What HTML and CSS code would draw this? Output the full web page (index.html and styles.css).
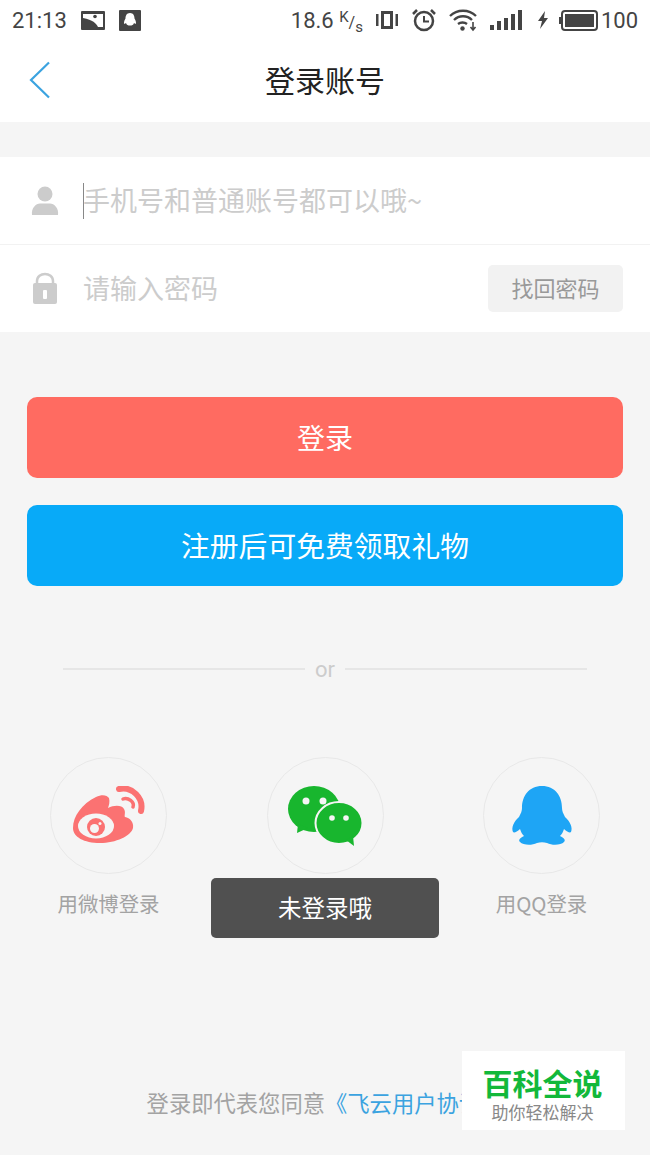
FILE: index.html
```html
<!DOCTYPE html>
<html>
<head>
  <meta charset="utf-8">
  <title>登录账号</title>
  <link rel="stylesheet" href="styles.css">
</head>
<body>

  <div class="status-bar">
    <span class="time">21:13</span>
    <svg width="24" height="19" viewBox="0 0 24 19"><rect width="24" height="19" rx="1" fill="#444"/><path d="M2 3 H22 V16 H17 C15 12 12 9 2 7 Z" fill="#fff"/><circle cx="14" cy="5.500" r="1.800" fill="#444"/></svg>
    <svg class="qq-note" width="22" height="21" viewBox="0 0 22 21"><rect width="22" height="21" rx="1" fill="#444"/><path d="M11 3 C7.500 3 6.500 6 6.500 8.500 C5 11 4.500 13.500 5.500 14 L7 13 C7.500 15 9 15.500 11 15.500 C13 15.500 14.500 15 15 13 L16.500 14 C17.500 13.500 17 11 15.500 8.500 C15.500 6 14.500 3 11 3 Z" fill="#fff"/></svg>
    <span class="speed">18.6 <span class="speed-unit"><sup>K</sup>/<sub>s</sub></span></span>
    <svg width="24" height="20" viewBox="0 0 24 20"><path d="M6 1 H18 V19 H6 Z M9 4 V16 H15 V4 Z" fill="#444" fill-rule="evenodd"/><rect x="1" y="4" width="2.500" height="12" fill="#444"/><rect x="20.500" y="4" width="2.500" height="12" fill="#444"/></svg>
    <svg width="26" height="24" viewBox="0 0 26 24"><circle cx="13" cy="13" r="9" fill="none" stroke="#444" stroke-width="2.500"/><path d="M13 8 V13.500 H18" fill="none" stroke="#444" stroke-width="2"/><path d="M2 6 L6 2 M24 6 L20 2" stroke="#444" stroke-width="2.500"/></svg>
    <svg width="28" height="24" viewBox="0 0 28 24"><path d="M1 8 C8 1 20 1 27 8 M5 12 C10 7 18 7 23 12 M9 16 C11.500 14 15.500 14 18 16" fill="none" stroke="#444" stroke-width="2.300"/><circle cx="13.500" cy="20.500" r="2.200" fill="#444"/><path d="M24 14 V21 M21.500 19 L24 22 L26.500 19" fill="none" stroke="#444" stroke-width="1.600"/></svg>
    <svg class="signal" width="33" height="20" viewBox="0 0 33 20"><rect x="0" y="15" width="4" height="5" fill="#444"/><rect x="7" y="11" width="4" height="9" fill="#444"/><rect x="14" y="8" width="4" height="12" fill="#444"/><rect x="21" y="4" width="4" height="16" fill="#444"/><rect x="28" y="0" width="4" height="20" fill="#444"/></svg>
    <svg class="bolt" width="12" height="18" viewBox="0 0 12 18"><path d="M8 0 L1 10 H5 L3 18 L11 7 H7 Z" fill="#444"/></svg>
    <svg class="batt" width="39" height="21" viewBox="0 0 39 21"><rect x="3" y="1" width="35" height="19" rx="3" fill="none" stroke="#444" stroke-width="2"/><rect x="6" y="4" width="29" height="13" fill="#444"/><rect x="0" y="7" width="2" height="7" fill="#444"/></svg>
    <span class="battery">100</span>
  </div>

  <div class="nav">
    <svg class="back" width="22" height="38" viewBox="0 0 22 38"><path d="M20 1.500 L2 19 L20 36.500" fill="none" stroke="#3ba3e0" stroke-width="2.200"/></svg>
    <div class="nav-title">登录账号</div>
  </div>

  <div class="form">
    <div class="row row-user">
      <svg class="row-icon" width="28" height="30" viewBox="0 0 28 30"><circle cx="14" cy="8" r="7.500" fill="#ccc"/><path d="M1 29 C0 22 5 17.500 9 17.500 H19 C23 17.500 28 22 27 29 Z" fill="#ccc"/></svg>
      <span class="caret"></span>
      <span class="placeholder first">手机号和普通账号都可以哦~</span>
    </div>
    <div class="row">
      <svg class="row-icon" width="26" height="33" viewBox="0 0 26 33"><path d="M5 13 V9 C5 -0.500 21 -0.500 21 9 V13" fill="none" stroke="#ccc" stroke-width="2.500"/><rect x="1" y="11" width="24" height="21" rx="2" fill="#ccc"/><rect x="11" y="18" width="4" height="9" rx="1" fill="#fff"/></svg>
      <span class="placeholder pw">请输入密码</span>
      <button class="find-btn">找回密码</button>
    </div>
  </div>

  <button class="btn btn-login">登录</button>
  <button class="btn btn-register">注册后可免费领取礼物</button>

  <div class="divider"><span>or</span></div>

  <div class="socials">
    <div class="social">
      <div class="circle">
        <svg width="74" height="60" viewBox="0 0 74 60"><path d="M1 42 C1 30 10 18 24 11 C30 8 35 9 37 12 C38 16 37 19 36 22 C42 19 50 19 52 23 C54 26 52 30 53 31 C58 32 62 36 61 42 C59 50 44 57 28 57 C12 57 1 51 1 42 Z" fill="#fb7272"/><ellipse cx="24" cy="40" rx="18" ry="12.500" fill="#f5f5f5"/><circle cx="24" cy="41" r="9" fill="#fb7272"/><circle cx="22.500" cy="42.500" r="4.500" fill="#f5f5f5"/><circle cx="28" cy="37.500" r="1.500" fill="#f5f5f5"/><path d="M47 3 C60 0 72 12 69 25" fill="none" stroke="#fb7272" stroke-width="6" stroke-linecap="round"/><path d="M51 13 C56 11 63 16 61 21" fill="none" stroke="#fb7272" stroke-width="3.500" stroke-linecap="round"/></svg>
      </div>
      <div class="social-label">用微博登录</div>
    </div>
    <div class="social">
      <div class="circle">
        <svg width="74" height="60" viewBox="0 0 74 60"><ellipse cx="26" cy="23" rx="26" ry="23" fill="#18b62e"/><path d="M10 38 L9 47 L20 42 Z" fill="#18b62e"/><ellipse cx="51" cy="37" rx="23.500" ry="21" fill="#18b62e" stroke="#f5f5f5" stroke-width="2"/><path d="M58 54 L66 60 L65 50 Z" fill="#18b62e"/><circle cx="18" cy="15" r="3.500" fill="#f5f5f5"/><circle cx="35" cy="15" r="3.500" fill="#f5f5f5"/><circle cx="44" cy="32" r="2.800" fill="#f5f5f5"/><circle cx="58" cy="32" r="2.800" fill="#f5f5f5"/></svg>
      </div>
      <div class="social-label">&nbsp;</div>
    </div>
    <div class="social">
      <div class="circle">
        <svg width="62" height="60" viewBox="0 0 62 60"><path d="M31 0 C44 0 51 10 51 22 C51 25 52 27 54 31 C59 35 62 42 60 46 C59 47 56 46 53 43 C52 46 51 48 49 50 C53 52 55 54 53 56 C50 59 42 60 36 57 C33 56 29 56 26 57 C20 60 12 59 9 56 C7 54 9 52 13 50 C11 48 10 46 9 43 C6 46 3 47 2 46 C0 42 3 35 8 31 C10 27 11 25 11 22 C11 10 18 0 31 0 Z" fill="#1ea5f5"/></svg>
      </div>
      <div class="social-label">用QQ登录</div>
    </div>
  </div>

  <div class="agreement">登录即代表您同意<span class="agreement-link">《飞云用户协议》</span></div>

  <div class="toast">未登录哦</div>

  <div class="watermark">
    <div class="wm-title">百科全说</div>
    <div class="wm-sub">助你轻松解决</div>
  </div>

</body>
</html>
```

FILE: styles.css
```css
html, body {
  margin: 0;
  padding: 0;
}

body {
  position: relative;
  width: 650px;
  height: 1155px;
  overflow: hidden;
  background: #f5f5f5;
  font-family: "Noto Sans CJK SC", "Roboto", sans-serif;
}

/* Status bar */
.status-bar {
  display: flex;
  align-items: center;
  height: 40px;
  padding: 0 12px;
  background: white;
  color: #444;
  font-family: "Roboto", sans-serif;
  font-size: 22px;
  gap: 12px;
}

.time {
  margin-right: 2px;
}

.qq-note {
  margin-left: 2px;
}

.speed {
  margin-left: auto;
  white-space: nowrap;
}

.speed-unit {
  font-size: 16px;
}

.speed-unit sup, .speed-unit sub {
  font-size: 15px;
  line-height: 0;
}

.signal {
  margin-left: 1px;
}

.bolt {
  margin-left: 2px;
}

.batt {
  margin-left: -2px;
}

.battery {
  margin-left: -9px;
}

/* Nav */
.nav {
  position: relative;
  height: 82px;
  padding-bottom: 5px;
  box-sizing: border-box;
  display: flex;
  align-items: center;
  justify-content: center;
  background: white;
}

.back {
  position: absolute;
  left: 29px;
  top: 21px;
}

.nav-title {
  font-size: 30px;
  line-height: 40px;
  color: #222;
}

/* Form */
.form {
  margin-top: 35px;
  background: white;
}

.row {
  display: flex;
  align-items: center;
  height: 87px;
  padding-left: 31px;
  padding-right: 27px;
}

.row-user {
  border-bottom: 1px solid #f2f2f2;
}

.row-icon {
  flex: none;
  width: 28px;
}

.caret {
  width: 1px;
  height: 36px;
  margin-left: 24px;
  background: #888;
}

.placeholder {
  padding-bottom: 3px;
  font-size: 27px;
  color: #ccc;
  white-space: nowrap;
}

.first {
  margin-left: -1px;
}

.pw {
  margin-left: 24px;
}

.find-btn {
  margin-left: auto;
  width: 135px;
  height: 47px;
  padding: 0 0 3px;
  border: none;
  border-radius: 5px;
  background: #f2f2f2;
  color: #999;
  font-family: inherit;
  font-size: 22px;
}

/* Buttons */
.btn {
  display: block;
  width: 596px;
  height: 81px;
  margin-left: 27px;
  padding: 0 0 2px;
  border: none;
  border-radius: 10px;
  color: white;
  font-family: inherit;
}

.btn-login {
  margin-top: 65px;
  background: #ff6b61;
  font-size: 28px;
}

.btn-register {
  margin-top: 27px;
  background: #08aaf8;
  font-size: 28.800px;
}

/* or */
.divider {
  display: flex;
  align-items: center;
  margin: 68px 63px 0;
  height: 30px;
  gap: 10px;
  color: #ccc;
  font-family: "Roboto", sans-serif;
  font-size: 22px;
}

.divider::before, .divider::after {
  content: "";
  flex: 1;
  height: 2px;
  background: #e6e6e6;
}

/* Social logins */
.socials {
  display: flex;
  justify-content: space-between;
  margin: 73px 50px 0;
}

.social {
  width: 117px;
  display: flex;
  flex-direction: column;
  align-items: center;
}

.circle {
  display: flex;
  align-items: center;
  justify-content: center;
  width: 115px;
  height: 115px;
  border: 1px solid #e8e8e8;
  border-radius: 50%;
}

.social-label {
  margin-top: 14px;
  font-size: 20.400px;
  line-height: 30px;
  color: #a3a3a3;
  white-space: nowrap;
}

.agreement {
  margin-top: 168px;
  text-align: center;
  font-size: 22.300px;
  line-height: 32px;
  color: #a3a3a3;
}

.agreement-link {
  color: #3ba3e0;
}

/* Toast */
.toast {
  position: absolute;
  left: 211px;
  top: 878px;
  width: 228px;
  height: 60px;
  line-height: 58px;
  text-align: center;
  background: #505050;
  border-radius: 5px;
  color: white;
  font-size: 23.500px;
}

/* Watermark */
.watermark {
  position: absolute;
  left: 462px;
  top: 1051px;
  width: 161px;
  height: 79px;
  padding-right: 2px;
  background: white;
  text-align: center;
}

.wm-title {
  margin-top: 13px;
  font-size: 30px;
  line-height: 36px;
  font-weight: bold;
  color: #12b83a;
}

.wm-sub {
  margin-top: 1px;
  font-size: 17px;
  line-height: 22px;
  color: #888;
}
```
